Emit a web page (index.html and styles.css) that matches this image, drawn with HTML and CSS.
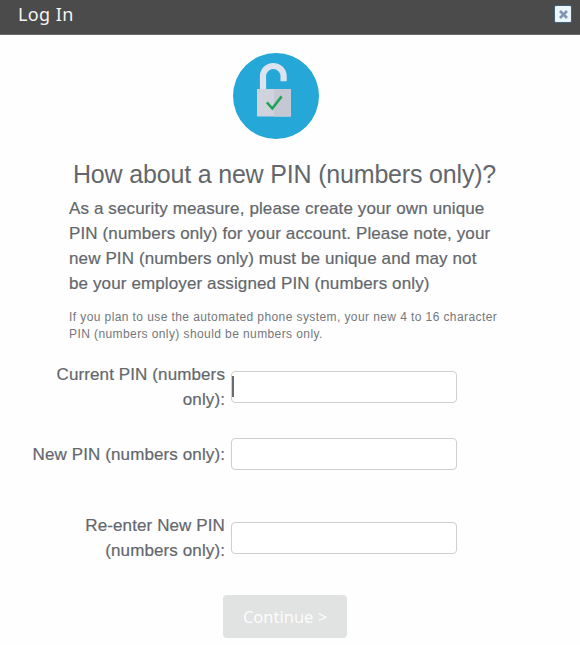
FILE: index.html
```html
<!DOCTYPE html>
<html lang="en">
<head>
    <meta charset="UTF-8">
    <meta name="viewport" content="width=device-width, initial-scale=1.0">
    <title>Log In</title>
    <link rel="stylesheet" href="styles.css">
</head>
<body>
    <div class="dialog">
        <div class="dialog-header">
            <span class="dialog-title">Log In</span>
            <button class="close-btn" type="button" aria-label="Close">
                <svg width="9" height="9" viewBox="0 0 9 9">
                    <path d="M1 1 L8 8 M8 1 L1 8" stroke="#8293b4" stroke-width="2.6"/>
                </svg>
            </button>
        </div>

        <div class="dialog-body">
            <svg class="lock-icon" width="86" height="86" viewBox="0 0 86 86">
                <circle cx="43" cy="43" r="43" fill="#25a7d7"/>
                <path d="M30 37 V23.3 a10.3 10.3 0 0 1 20.6 0 V28.2" fill="none" stroke="#dce3ef" stroke-width="6.2"/>
                <rect x="24" y="36" width="34" height="27.5" fill="#d0d3de"/>
                <path d="M41 36 H58 V63.5 H41 Z" fill="#c5c8d4"/>
                <path d="M33.9 49.4 L39.3 55.5 L48.6 43.4" fill="none" stroke="#1fa558" stroke-width="2.6"/>
            </svg>

            <h1>How about a new PIN (numbers only)?</h1>
            <p class="intro">As a security measure, please create your own unique<br>PIN (numbers only) for your account. Please note, your<br>new PIN (numbers only) must be unique and may not<br>be your employer assigned PIN (numbers only)</p>
            <p class="note">If you plan to use the automated phone system, your new 4 to 16 character<br>PIN (numbers only) should be numbers only.</p>

            <form class="pin-form">
                <div class="form-row">
                    <label for="currentPin">Current PIN (numbers<br>only):</label>
                    <div class="field">
                        <span class="caret"></span>
                        <input id="currentPin" type="password">
                    </div>
                </div>
                <div class="form-row">
                    <label for="newPin">New PIN (numbers only):</label>
                    <div class="field">
                        <input id="newPin" type="password">
                    </div>
                </div>
                <div class="form-row last">
                    <label for="confirmPin">Re-enter New PIN<br>(numbers only):</label>
                    <div class="field">
                        <input id="confirmPin" type="password">
                    </div>
                </div>
                <button class="continue-btn" type="button">Continue &gt;</button>
            </form>
        </div>
    </div>
</body>
</html>
```

FILE: styles.css
```css
* {
    box-sizing: border-box;
}

body {
    margin: 0;
    background-color: #fefefe;
    color: #63676c;
    font-family: "Liberation Sans", Arial, sans-serif;
}

.dialog {
    height: 645px;
    overflow: hidden;
}

.dialog-header {
    display: flex;
    align-items: flex-start;
    justify-content: space-between;
    height: 35px;
    padding: 0 8px 0 18px;
    background-color: #4b4b4b;
    border-bottom: 1px solid #6a6a6a;
}

.dialog-title {
    color: #f4f4f4;
    font-family: "Noto Sans", Verdana, sans-serif;
    font-size: 18px;
    letter-spacing: 0.4px;
    line-height: 28px;
}

.close-btn {
    display: flex;
    align-items: center;
    justify-content: center;
    width: 18px;
    height: 18px;
    margin-top: 5px;
    padding: 0;
    background-color: #eaf6fc;
    border: 1px solid #42627c;
    border-radius: 2px;
}

.dialog-body {
    display: flex;
    flex-direction: column;
    padding-top: 18px;
}

.lock-icon {
    margin-left: 233px;
}

h1 {
    margin: 20px 0 0 73px;
    font-size: 25px;
    font-weight: normal;
    letter-spacing: -0.18px;
    line-height: 30px;
    white-space: nowrap;
}

.intro {
    margin: 7px 0 0 69px;
    font-size: 17px;
    letter-spacing: 0.12px;
    line-height: 25px;
    white-space: nowrap;
    -webkit-text-stroke: 0.2px #63676c;
}

.note {
    margin: 13px 0 0 69px;
    color: #74777b;
    font-size: 12px;
    letter-spacing: 0.41px;
    line-height: 17px;
    white-space: nowrap;
}

.pin-form {
    display: flex;
    flex-direction: column;
    margin-top: 19px;
}

.form-row {
    display: flex;
    align-items: center;
    height: 50px;
    margin-bottom: 17px;
}

.form-row.last {
    margin-top: 17px;
}

label {
    width: 225px;
    font-size: 17px;
    letter-spacing: 0.11px;
    line-height: 25px;
    text-align: right;
    white-space: nowrap;
    -webkit-text-stroke: 0.2px #63676c;
}

.field {
    position: relative;
    margin-left: 6px;
}

.field input {
    display: block;
    width: 226px;
    height: 32px;
    background-color: #fff;
    border: 1px solid #cfcfcf;
    border-radius: 4px;
    outline: none;
}

.caret {
    position: absolute;
    left: 1px;
    top: 5px;
    width: 2px;
    height: 21px;
    background-color: #6b6b6b;
}

.continue-btn {
    width: 124px;
    height: 43px;
    margin: 15px 0 0 223px;
    padding: 0;
    background-color: #e1e2e2;
    border: none;
    border-radius: 4px;
    color: #fcfcfc;
    font-family: "Noto Sans", Verdana, sans-serif;
    font-size: 16.5px;
}
```
